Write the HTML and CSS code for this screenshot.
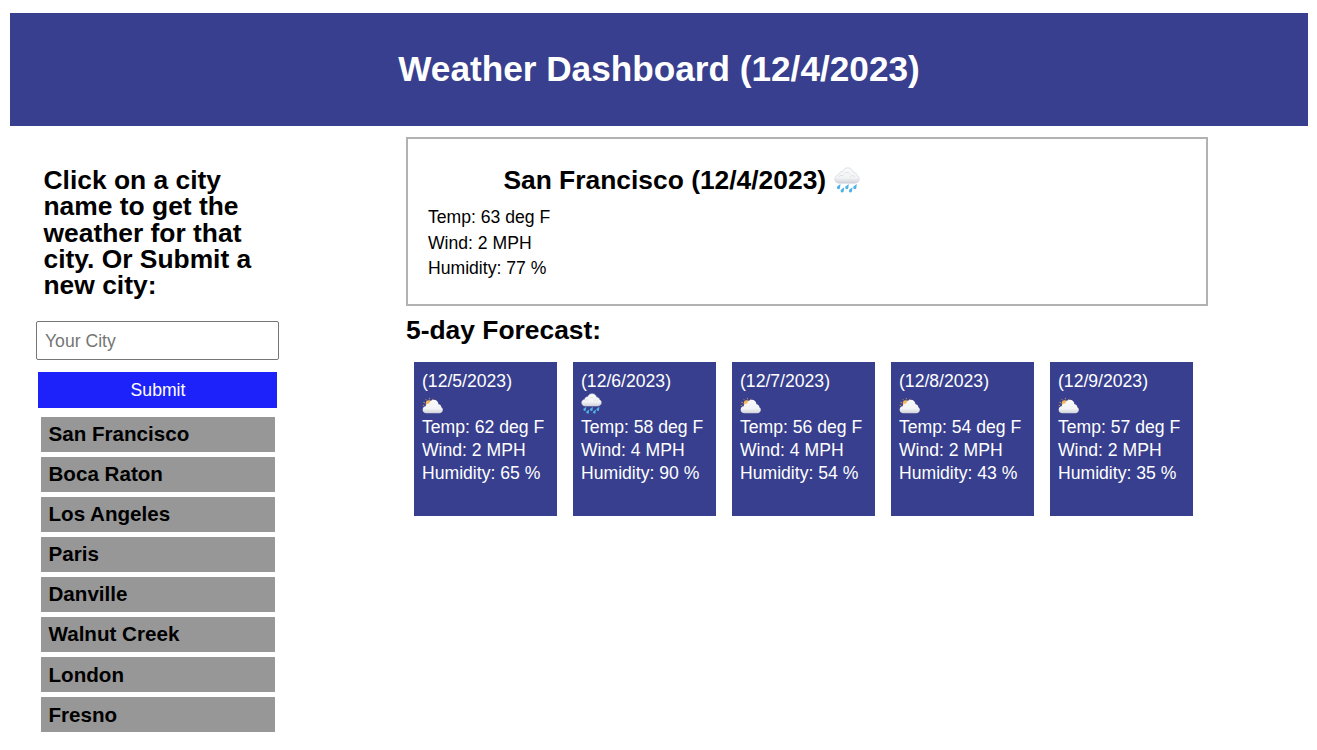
FILE: index.html
```html
<!DOCTYPE html>
<html lang="en">
<head>
<meta charset="utf-8">
<title>Weather Dashboard</title>
<link rel="stylesheet" href="styles.css">
</head>
<body>
<svg class="defs" aria-hidden="true">
  <defs>
    <linearGradient id="cloudFill" x1="0" y1="0" x2="0" y2="1">
      <stop offset="0" stop-color="#fafafc"/>
      <stop offset=".65" stop-color="#f3f4f6"/>
      <stop offset="1" stop-color="#cfd2da"/>
    </linearGradient>
    <symbol id="rain" viewBox="0 0 26 26">
      <path d="M5.500 16.200C2.800 16.200.8 14.400.8 12c0-2.200 1.600-3.800 3.800-4.100C4.800 5.800 6.500 4.500 8.400 4.600 9.400 2.200 11.300.8 13.700.8c2.900 0 5.100 1.900 5.600 4.400 2 .1 3.500 1.300 3.600 3.200 1.500.6 2.300 1.900 2.300 3.500 0 2.600-2 4.300-4.800 4.300z" fill="url(#cloudFill)" stroke="#cdd0d8" stroke-width=".6"/>
      <path d="M5 10c.8-1.500 2.800-2 4.300-1.200M10.500 6.500c1.500-1.500 4-1.400 5.200.2M15.500 10.500c1-2 3.800-2.500 5.500-.8" fill="none" stroke="#dcdee4" stroke-width=".9"/>
      <g fill="#4fb2e6">
        <path id="drop" d="M6.400 17l-2.900 2.300a1.600 1.600 0 1 0 2.600 1.500z"/>
        <use href="#drop" x="8.300"/><use href="#drop" x="16.300"/>
        <use href="#drop" x="3.700" y="3.300"/><use href="#drop" x="12" y="3.300"/>
      </g>
    </symbol>
    <symbol id="cloudy" viewBox="0 0 20 20">
      <g stroke="#d9a04a" stroke-width=".8" stroke-linecap="round">
        <path d="M7 5V5.700M3.800 6.200l.6.600M10.300 5.900l-.4.600M1.700 9l.8.200M1 12l.8-.3"/>
      </g>
      <circle cx="6.600" cy="10" r="3" fill="#f3b95a"/>
      <path d="M4.200 19.300C2.100 19.300.6 18 .6 15.900c0-1.800 1.200-3.100 2.900-3.300.3-1.700 1.700-2.700 3.300-2.500C7.500 7.900 9.200 6.500 11.300 6.500c2.400 0 4.100 1.700 4.400 4.200 1.600.1 2.700 1.300 2.700 2.800.9.500 1.400 1.400 1.400 2.500 0 2-1.400 3.300-3.400 3.300z" fill="url(#cloudFill)"/>
    </symbol>
  </defs>
</svg>
<header class="banner"><h1>Weather Dashboard (12/4/2023)</h1></header>
<div class="layout">
  <aside class="sidebar">
    <h2 class="prompt">Click on a city name to get the weather for that city. Or Submit a new city:</h2>
    <form class="search">
      <input class="city-input" type="text" placeholder="Your City">
      <button class="submit" type="button">Submit</button>
    </form>
    <ul class="cities">
      <li>San Francisco</li><li>Boca Raton</li><li>Los Angeles</li><li>Paris</li>
      <li>Danville</li><li>Walnut Creek</li><li>London</li><li>Fresno</li>
    </ul>
  </aside>
  <main class="content">
    <section class="current">
      <h2 class="current-title">San Francisco (12/4/2023) <svg class="icon-large"><use href="#rain"/></svg></h2>
      <p>Temp: 63 deg F</p><p>Wind: 2 MPH</p><p>Humidity: 77 %</p>
    </section>
    <h2 class="forecast-title">5-day Forecast:</h2>
    <section class="forecast">
      <article class="day"><p>(12/5/2023)</p><svg class="icon"><use href="#cloudy"/></svg><p>Temp: 62 deg F</p><p>Wind: 2 MPH</p><p>Humidity: 65 %</p></article>
      <article class="day"><p>(12/6/2023)</p><svg class="icon"><use href="#rain"/></svg><p>Temp: 58 deg F</p><p>Wind: 4 MPH</p><p>Humidity: 90 %</p></article>
      <article class="day"><p>(12/7/2023)</p><svg class="icon"><use href="#cloudy"/></svg><p>Temp: 56 deg F</p><p>Wind: 4 MPH</p><p>Humidity: 54 %</p></article>
      <article class="day"><p>(12/8/2023)</p><svg class="icon"><use href="#cloudy"/></svg><p>Temp: 54 deg F</p><p>Wind: 2 MPH</p><p>Humidity: 43 %</p></article>
      <article class="day"><p>(12/9/2023)</p><svg class="icon"><use href="#cloudy"/></svg><p>Temp: 57 deg F</p><p>Wind: 2 MPH</p><p>Humidity: 35 %</p></article>
    </section>
  </main>
</div>
</body>
</html>
```
FILE: styles.css
```css
* { box-sizing: border-box; }
html { overflow: hidden; }
body {
  margin: 0;
  padding: 13px 9px 0 10px;
  font-family: "Liberation Sans", Arial, sans-serif;
  font-size: 17.6px;
  color: #000;
  background: #fff;
}
h1, h2, p, ul { margin: 0; padding: 0; }
.defs { display: block; width: 0; height: 0; }
.banner {
  height: 113px;
  padding-bottom: 2px;
  display: flex;
  align-items: center;
  justify-content: center;
  background: #383f8e;
  color: #fff;
}
h1 { font-size: 35.2px; line-height: 40px; }
h2 { font-size: 26.4px; line-height: 26.4px; }
.layout { display: flex; align-items: flex-start; }
.sidebar { width: 243px; margin-left: 26px; padding-top: 41px; }
.prompt { height: 132px; padding: 0 20px 0 7.500px; line-height: 26.3px; }
.search { display: flex; flex-direction: column; margin-top: 22px; }
.city-input {
  height: 39px;
  padding: 2px 8px 0;
  border: 1px solid #767676;
  border-radius: 2px;
  font: inherit;
}
.city-input::placeholder { color: #757575; }
.submit {
  height: 36px;
  margin: 12px 2px 0;
  padding: 0 0 0 1px;
  border: 0;
  background: #1e22fa;
  color: #fff;
  font: inherit;
}
.cities {
  list-style: none;
  margin: 9px 4px 0 5px;
  display: grid;
  gap: 5px;
}
.cities li {
  height: 35px;
  padding-left: 7.500px;
  background: #979797;
  font-size: 20.6px;
  font-weight: bold;
  line-height: 33px;
}
.cities li:nth-child(n + 7) { line-height: 35px; }
.content { width: 802px; margin: 11px 0 0 127px; }
.current {
  height: 169px;
  padding: 28px 20px 0;
  border: 2px solid #b2b2b2;
}
.current-title {
  display: flex;
  align-items: center;
  gap: 8px;
  height: 26.4px;
  margin: 0 0 11.700px 75.400px;
}
.current p { line-height: 25.500px; }
.icon-large { width: 26px; height: 26px; }
.forecast-title { margin-top: 11px; }
.forecast { display: flex; gap: 16px; margin: 19px 8px 0; }
.day {
  width: 143px;
  height: 154px;
  padding: 8px 0 0 8px;
  background: #383f8e;
  color: #fff;
  line-height: 23px;
  white-space: nowrap;
}
.icon { display: block; width: 21px; height: 21px; margin: 0 0 2px; }
```
